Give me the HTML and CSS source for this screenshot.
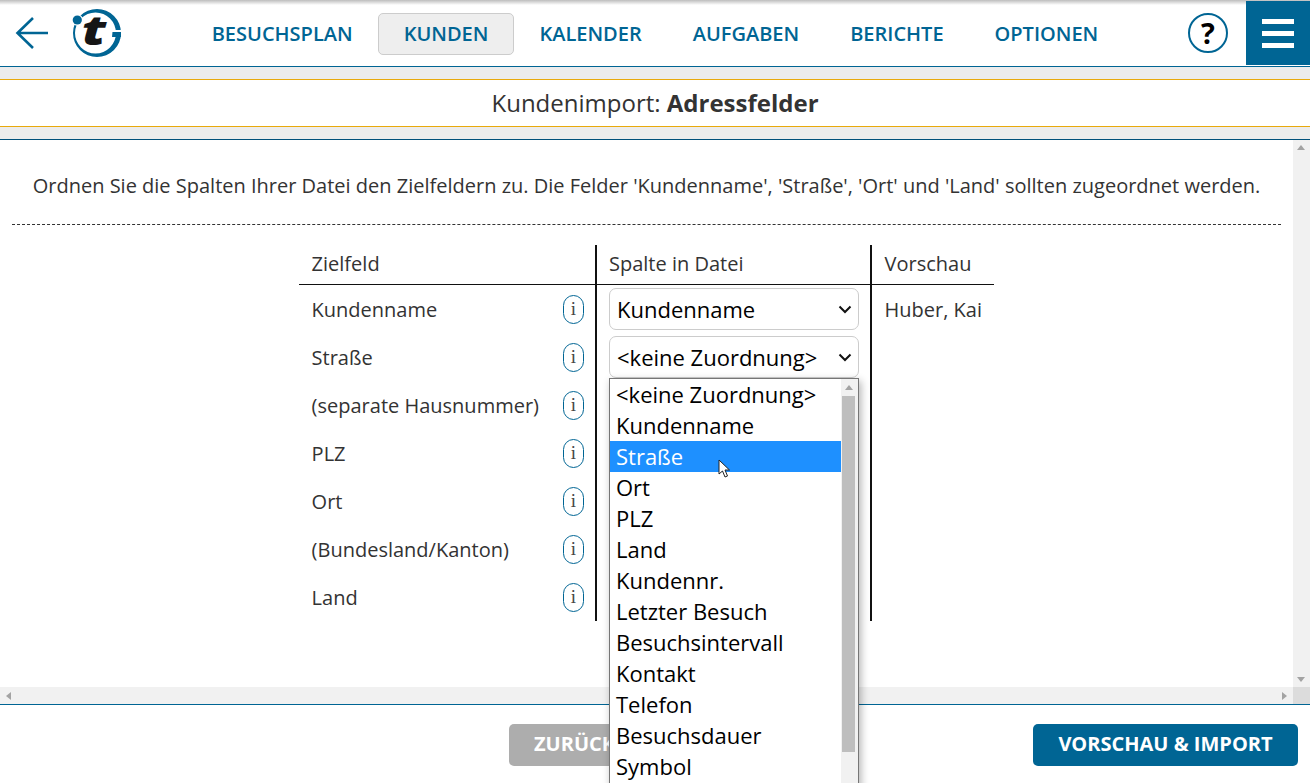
FILE: index.html
```html
<!DOCTYPE html>
<html lang="de">
<head>
<meta charset="utf-8">
<title>Kundenimport</title>
<link rel="stylesheet" href="styles.css">
</head>
<body>
<div class="app">
  <header class="topbar">
    <svg class="back" width="36" height="36" viewBox="0 0 36 36"><path d="M34 18H3.500M19 3L3.500 18 19 33" fill="none" stroke="#006594" stroke-width="2.6"/></svg>
    <svg class="logo" width="52" height="66" viewBox="0 -7 52 66">
      <path fill-rule="evenodd" fill="#006594" d="M26 2a24 24 0 1 1 0 48a24 24 0 1 1 0-48zM24.500 5.500a20.500 20.500 0 1 0 0 41a20.500 20.500 0 1 0 0-41z"/>
      <path d="M41 23h10v2H41z" fill="#fff"/>
      <path d="M41.500 25H50v5H41z" fill="#006594"/>
      <circle cx="6.300" cy="13" r="5.800" fill="#fff"/>
      <circle cx="6.300" cy="13" r="4.600" fill="#006594"/>
      <text class="logo-t" transform="translate(11 38) scale(1.3 1)">t</text>
    </svg>
    <nav class="nav">
      <a class="nav-item">BESUCHSPLAN</a>
      <a class="nav-item active">KUNDEN</a>
      <a class="nav-item">KALENDER</a>
      <a class="nav-item">AUFGABEN</a>
      <a class="nav-item">BERICHTE</a>
      <a class="nav-item">OPTIONEN</a>
    </nav>
    <div class="help">?</div>
    <div class="burger"><span></span><span></span><span></span></div>
  </header>
  <div class="band"></div>
  <div class="title">Kundenimport: <b>Adressfelder</b></div>
  <div class="band band-low"></div>

  <main class="scroller">
    <div class="content">
      <p class="intro">Ordnen Sie die Spalten Ihrer Datei den Zielfeldern zu. Die Felder 'Kundenname', 'Straße', 'Ort' und 'Land' sollten zugeordnet werden.</p>
      <div class="table">
        <div class="col col-a">
          <div class="head">Zielfeld</div>
          <div class="row"><span>Kundenname</span><i class="info">i</i></div>
          <div class="row"><span>Straße</span><i class="info">i</i></div>
          <div class="row"><span>(separate Hausnummer)</span><i class="info">i</i></div>
          <div class="row"><span>PLZ</span><i class="info">i</i></div>
          <div class="row"><span>Ort</span><i class="info">i</i></div>
          <div class="row"><span>(Bundesland/Kanton)</span><i class="info">i</i></div>
          <div class="row"><span>Land</span><i class="info">i</i></div>
        </div>
        <div class="col col-b">
          <div class="head">Spalte in Datei</div>
          <div class="row"><div class="select">Kundenname<svg width="14" height="9" viewBox="0 0 14 9"><path d="M1.500 1.500L7 7l5.500-5.500" fill="none" stroke="#111" stroke-width="2"/></svg></div></div>
          <div class="row"><div class="select">&lt;keine Zuordnung&gt;<svg width="14" height="9" viewBox="0 0 14 9"><path d="M1.500 1.500L7 7l5.500-5.500" fill="none" stroke="#111" stroke-width="2"/></svg></div></div>
        </div>
        <div class="col col-c">
          <div class="head">Vorschau</div>
          <div class="row">Huber, Kai</div>
        </div>
      </div>
    </div>
    <div class="vbar"><b class="up"></b><b class="down"></b></div>
    <div class="hbar"><b class="left"></b><b class="right"></b></div>
    <div class="corner"></div>
  </main>

  <footer class="footer">
    <a class="btn btn-grey">ZURÜCK</a>
    <a class="btn btn-blue">VORSCHAU &amp; IMPORT</a>
  </footer>
</div>

<div class="dropdown">
  <ul class="options">
    <li>&lt;keine Zuordnung&gt;</li>
    <li>Kundenname</li>
    <li class="hover">Straße</li>
    <li>Ort</li>
    <li>PLZ</li>
    <li>Land</li>
    <li>Kundennr.</li>
    <li>Letzter Besuch</li>
    <li>Besuchsintervall</li>
    <li>Kontakt</li>
    <li>Telefon</li>
    <li>Besuchsdauer</li>
    <li>Symbol</li>
  </ul>
  <div class="dd-bar"><b class="dd-up"></b><div class="dd-thumb"></div></div>
</div>
<svg class="cursor" width="14" height="20" viewBox="0 0 14 20"><path d="M1 1v14l3.500-3 2.500 6 2.500-1-2.500-6h4.500z" fill="#fff" stroke="#222" stroke-width="1"/></svg>
</body>
</html>
```
FILE: styles.css
```css
* { box-sizing: border-box; }
html, body { margin: 0; height: 783px; overflow: hidden; background: #fff; }
body { font-family: "Open Sans", sans-serif; color: #333; position: relative; }
.app { display: flex; flex-direction: column; height: 783px; }

.topbar { height: 66px; flex: none; display: flex; align-items: center; position: relative; padding-left: 14px; }
.topbar::before { content: ""; position: absolute; left: 0; right: 0; top: 0; height: 5px; background: linear-gradient(#bdbdbd, #fff); }
.back { flex: none; }
.logo { flex: none; margin-left: 21px; }
.logo-t { font: italic 800 41px "Open Sans", sans-serif; fill: #151515; }
.nav { display: flex; align-items: center; margin-left: 63.2px; margin-top: 2px; }
.nav-item { font-size: 20px; font-weight: 600; color: #006594; line-height: 42px; height: 42px; white-space: nowrap; padding: 0 25.5px; }
.nav-item.active { background: #eee; border: 1px solid #ccc; border-radius: 5px; padding: 0 24.5px; line-height: 40px; }
.help { position: absolute; left: 1188px; top: 13px; width: 40px; height: 40px; border: 2.500px solid #006594; border-radius: 50%; text-align: center; font-weight: 700; font-size: 29px; line-height: 35px; color: #000; }
.burger { position: absolute; left: 1246px; top: 1px; width: 64px; height: 64px; background: #006594; display: flex; flex-direction: column; justify-content: center; align-items: center; gap: 7px; }
.burger span { width: 32px; height: 5px; background: #fff; }

.band { height: 14px; flex: none; background: #ececec; border-top: 1px solid #006594; border-bottom: 1px solid #e8a90c; }
.band-low { border-top-color: #e8a90c; border-bottom-color: #00507a; }
.title { height: 46px; flex: none; text-align: center; font-size: 24px; line-height: 46px; }
.title b { font-weight: 700; }

.scroller { height: 564px; flex: none; position: relative; overflow: hidden; }
.content { padding: 0 29px 0 12px; }
.intro { margin: 0; height: 85px; border-bottom: 1px dashed #333; font-size: 20px; line-height: 91px; white-space: nowrap; text-align: center; }
.table { display: flex; margin: 20px 0 0 287px; width: 695px; font-size: 20px; }
.col { display: flex; flex-direction: column; height: 376px; }
.col-a { width: 298px; border-right: 2px solid #111; }
.col-b { width: 275px; border-right: 2px solid #111; }
.col-c { width: 122px; }
.head { height: 40px; flex: none; padding: 5px 0 0 12.6px; line-height: 28px; border-bottom: 1px solid #111; margin-right: -2px; }
.col-b .head { padding-left: 12px; }
.col-c .head { margin-right: 0; }
.row { height: 48px; flex: none; display: flex; align-items: center; padding-left: 12.6px; white-space: nowrap; justify-content: space-between; }
.col-a .row { padding-right: 11px; }
.info { width: 21px; height: 29px; border: 1px solid #006594; border-radius: 11px; text-align: center; font-style: normal; font-family: "Liberation Serif", serif; font-size: 19px; line-height: 26px; color: #444; }
.select { width: 250px; height: 42px; border: 1px solid #ccc; border-radius: 7px; background: #fff; padding: 0 6px 0 7px; display: flex; align-items: center; justify-content: space-between; color: #000; font-size: 22px; margin-left: -0.6px; }
.select svg { flex: none; }

.vbar { position: absolute; right: 0; top: 0; width: 17px; height: 547px; background: #f1f1f1; }
.hbar { position: absolute; left: 0; bottom: 0; height: 17px; right: 17px; background: #f1f1f1; }
.corner { position: absolute; right: 0; bottom: 0; width: 17px; height: 17px; background: #dcdcdc; }
.up, .down, .left, .right { position: absolute; width: 0; height: 0; border: 4px solid transparent; }
.up { left: 4px; top: 5px; border-bottom: 5px solid #a3a3a3; border-top: 0; }
.down { left: 4px; bottom: 5px; border-top: 5px solid #a3a3a3; border-bottom: 0; }
.left { left: 6px; top: 5px; border-right: 5px solid #a3a3a3; border-left: 0; }
.right { right: 6px; top: 5px; border-left: 5px solid #a3a3a3; border-right: 0; }

.footer { flex: 1; border-top: 1px solid #006594; position: relative; background: #fff; }
.btn { position: absolute; top: 19px; height: 42px; border-radius: 5px; color: #fff; font-weight: 700; font-size: 20px; line-height: 40px; text-align: center; }
.btn-grey { left: 509px; width: 150px; padding-left: 25px; text-align: left; background: #adadad; }
.btn-blue { left: 1033px; width: 265px; background: #006594; }

.dropdown { position: absolute; left: 609px; top: 378px; width: 250px; height: 420px; background: #fff; border: 1px solid #767676; display: flex; box-shadow: 2px 3px 8px rgba(0,0,0,.3); overflow: hidden; }
.options { list-style: none; margin: 0; padding: 0; width: 231px; flex: none; font-size: 22px; color: #000; }
.options li { height: 31px; line-height: 31px; padding-left: 6px; white-space: nowrap; }
.options li.hover { background: #1e90ff; color: #fff; }
.dd-bar { width: 17px; flex: none; background: #f1f1f1; position: relative; }
.dd-up { position: absolute; left: 4px; top: 6px; width: 0; height: 0; border: 4px solid transparent; border-bottom: 5px solid #a3a3a3; border-top: 0; }
.dd-thumb { position: absolute; left: 1px; right: 3px; top: 17px; height: 356px; background: #bebebe; }
.cursor { position: absolute; left: 718px; top: 459px; }
```
